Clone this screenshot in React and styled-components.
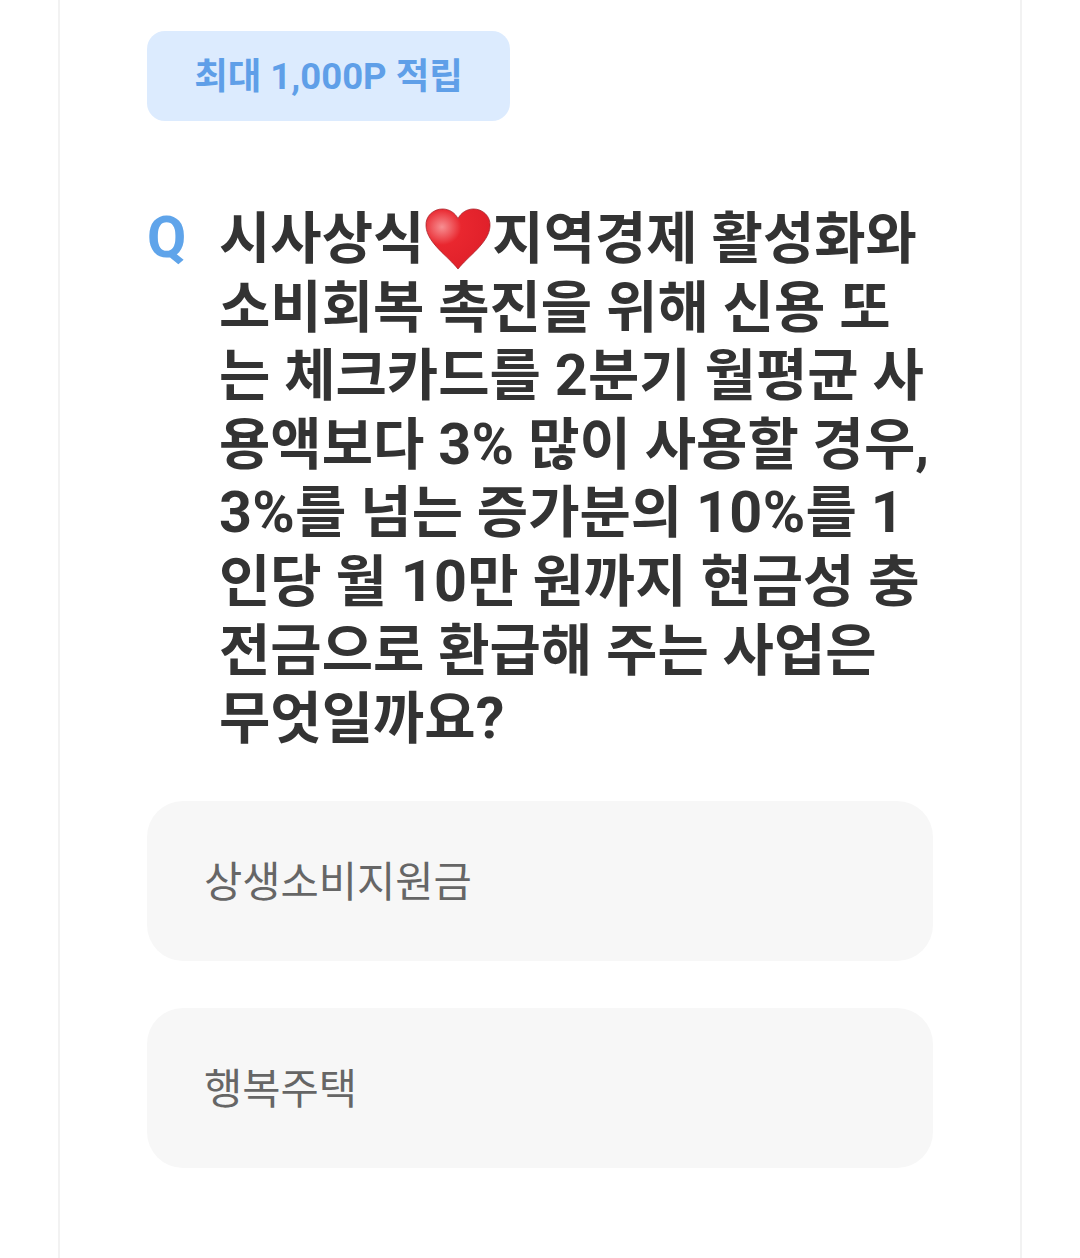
import React from 'react';
import styled, {createGlobalStyle} from 'styled-components';

const GlobalStyle = createGlobalStyle`
    html, body {
        margin: 0;
        padding: 0;
        background: #fff;
    }
`;

const Page = styled.div`
    width: 1080px;
    height: 1258px;
    overflow: hidden;
    display: flex;
    justify-content: center;
    font-family: Roboto, 'Noto Sans CJK KR', sans-serif;
`;

const Card = styled.div`
    width: 786px;
    height: 1258px;
    padding: 31px 87px 0 87px;
    border-left: 2px solid #f2f2f2;
    border-right: 2px solid #f2f2f2;
`;

const PointBadge = styled.div`
    width: 363px;
    height: 90px;
    box-sizing: border-box;
    padding-bottom: 6px;
    border-radius: 18px;
    background: #dcebfe;
    color: #5f9fe8;
    font-size: 36.5px;
    font-weight: 700;
    display: flex;
    align-items: center;
    justify-content: center;
`;

const Question = styled.div`
    display: flex;
    margin-top: 84px;
`;

const QMark = styled.div`
    width: 72px;
    flex-shrink: 0;
    color: #5fa4ea;
    font-size: 57px;
    font-weight: 700;
    line-height: 65px;
`;

const QuestionText = styled.div`
    width: 714px;
    color: #333;
    font-size: 55.8px;
    font-weight: 700;
    line-height: 68.6px;
`;

const Line = styled.div`
    white-space: nowrap;
`;

const Latin = styled.span`
    font-size: 57.5px;
    line-height: 0;
    letter-spacing: 0.3px;
`;

const Heart = styled.svg`
    width: 66px;
    height: 62px;
    margin: 0 1px;
    vertical-align: -12px;
`;

const Options = styled.div`
    display: flex;
    flex-direction: column;
    gap: 47px;
    margin-top: 47px;
`;

const Option = styled.div`
    height: 160px;
    box-sizing: border-box;
    padding: 0 0 4px 57px;
    border-radius: 36px;
    background: #f7f7f7;
    color: #666;
    font-size: 41.6px;
    display: flex;
    align-items: center;
`;

function App(){
    return(<Page>
        <GlobalStyle/>
        <Card>
            <PointBadge>최대 1,000P 적립</PointBadge>
            <Question>
                <QMark>Q</QMark>
                <QuestionText>
                    <Line>
                        시사상식
                        <Heart viewBox="0 0 68 64">
                            <defs>
                                <radialGradient id="heartFill" cx="0.25" cy="0.3" r="0.75">
                                    <stop offset="0" stopColor="#f78f92"/>
                                    <stop offset="0.4" stopColor="#e9272f"/>
                                    <stop offset="1" stopColor="#e0202a"/>
                                </radialGradient>
                            </defs>
                            <path d="M34 63C24 50 2 36 1 19 0 8 9 1 18 1c7 0 13 4 16 10C37 5 43 1 50 1c9 0 18 7 17 18C66 36 44 50 34 63Z" fill="url(#heartFill)" stroke="#a8232b" strokeWidth="0.8"/>
                        </Heart>
                        지역경제 활성화와
                    </Line>
                    <Line>소비회복 촉진을 위해 신용 또</Line>
                    <Line>는 체크카드를 <Latin>2</Latin>분기 월평균 사</Line>
                    <Line>용액보다 <Latin>3%</Latin> 많이 사용할 경우,</Line>
                    <Line><Latin>3%</Latin>를 넘는 증가분의 <Latin>10%</Latin>를 <Latin>1</Latin></Line>
                    <Line>인당 월 <Latin>10</Latin>만 원까지 현금성 충</Line>
                    <Line>전금으로 환급해 주는 사업은</Line>
                    <Line>무엇일까요<Latin>?</Latin></Line>
                </QuestionText>
            </Question>
            <Options>
                <Option>상생소비지원금</Option>
                <Option>행복주택</Option>
            </Options>
        </Card>
    </Page>);
}

export default App;
